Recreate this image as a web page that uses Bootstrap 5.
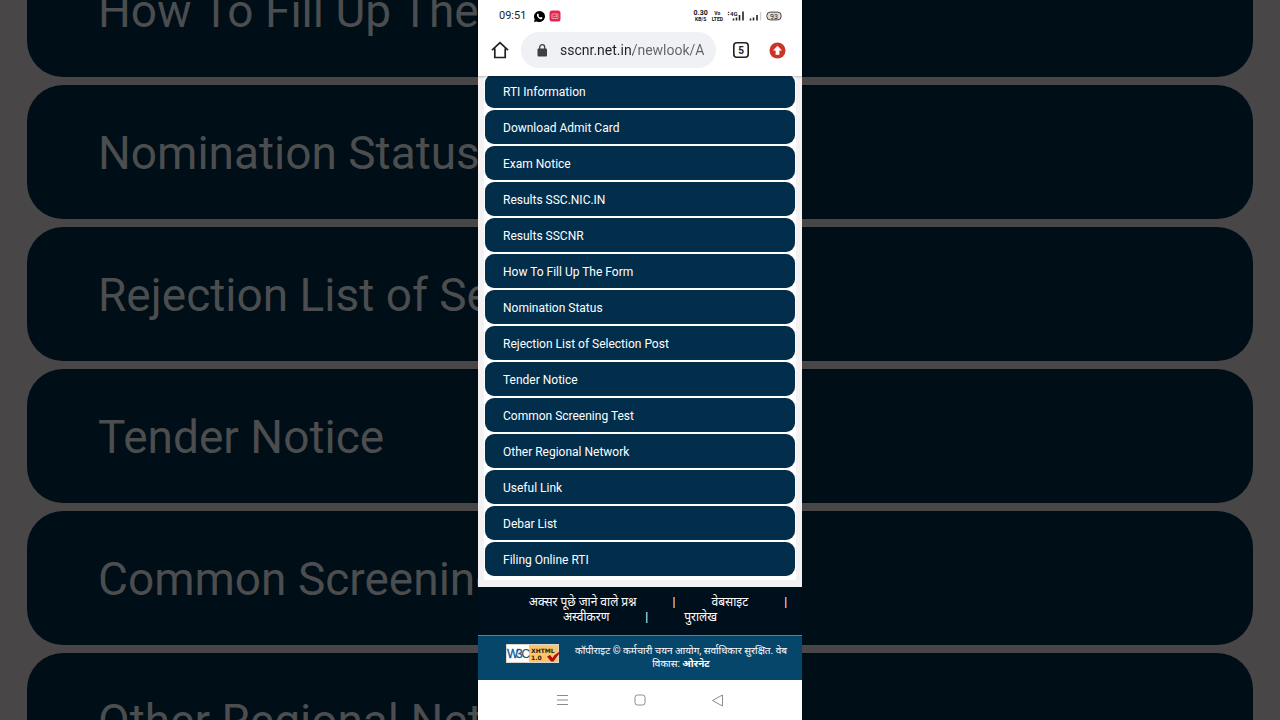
<!DOCTYPE html>
<html lang="en">
<head>
<meta charset="utf-8">
<meta name="viewport" content="width=device-width, initial-scale=1">
<title>SSCNR</title>
<link href="https://cdn.jsdelivr.net/npm/bootstrap@5.3.0/dist/css/bootstrap.min.css" rel="stylesheet">
<style>
  body { font-family: Roboto, "Noto Sans", "Liberation Sans", sans-serif; background: #484646; }
  .stage { display: grid; grid-template-columns: minmax(0, 1fr) 324px minmax(0, 1fr); height: 100vh; min-height: 720px; overflow: hidden; }
  .backdrop { gap: 8px; padding-top: 10px; min-height: 0; }
  .big-pill { flex: 0 0 134px; background: #000e17; color: #4b4d4e; font-size: 46px; line-height: 136px; white-space: nowrap; overflow: hidden; }
  .side-left .big-pill { margin-left: 27px; padding-left: 71px; border-radius: 36px 0 0 36px; }
  .side-right .big-pill { margin-right: 27px; border-radius: 0 36px 36px 0; }
  .phone { background: #f3f1f1; min-height: 0; }
  .top-area { z-index: 1; box-shadow: 0 1px 2px rgba(0,0,0,.25); }
  .status { height: 32px; padding: 0 20px 0 21px; font-size: 11px; line-height: 16px; color: #222; }
  .micro { font-size: 5px; line-height: 6px; font-weight: 700; color: #111; text-align: center; }
  .micro-lg { font-size: 7px; }
  .toolbar { height: 44px; padding: 0 16px 8px 13px; }
  .toolbar button { background: none; border: 0; padding: 0; line-height: 0; }
  .omnibox { height: 36px; border-radius: 18px; background: #f0f1f5; padding: 0 8px 0 15px; margin: 0 16px 0 12px; }
  .omnibox input { border: 0; padding: 0; width: 100%; font-size: 14px; line-height: 20px; color: #202124;
    background: linear-gradient(90deg, #202124 73px, #5f6368 73px); -webkit-background-clip: text; background-clip: text; -webkit-text-fill-color: transparent; outline: 0; }
  .tabs-btn { margin-right: 19px; }
  .panel { margin: -2px 6px 7px; padding: 0 1px 4px; background: #fff; }
  .menu-list { gap: 2px; }
  .menu-list .list-group-item { background: #032e4b; color: #fff; border: 0; border-radius: 9px; padding: 9px 18px 7px; font-size: 12px; line-height: 18px; }
  .foot-links { background: #000f1c; border-bottom: 1px solid #6d7a83; padding: 8px 0 10px; font-size: 12px; line-height: 15px; color: #fff; }
  .foot-links a { color: #fff; padding: 0 36px; text-decoration: none; }
  .foot-copy { background: #07466b; color: #fff; padding: 8px 15px 10px 28px; font-size: 10px; line-height: 13px; }
  .w3c { font-family: "DejaVu Sans", sans-serif; }
  .keys { padding: 0 78px; background: #fff; }
  .keys button { background: none; border: 0; padding: 0; line-height: 0; }
</style>
</head>
<body>
<main class="stage">
  <div class="backdrop side-left d-flex flex-column justify-content-center" aria-hidden="true">
    <div class="big-pill">How To Fill Up The</div>
    <div class="big-pill">Nomination Status</div>
    <div class="big-pill">Rejection List of Selection Post</div>
    <div class="big-pill">Tender Notice</div>
    <div class="big-pill">Common Screening Test</div>
    <div class="big-pill">Other Regional Network</div>
  </div>

  <section class="phone d-flex flex-column">
    <header class="top-area bg-white position-relative">
      <div class="status d-flex align-items-center">
        <span class="me-2">09:51</span>
        <svg width="11" height="11" viewBox="0 0 20 20" class="me-1" aria-label="WhatsApp"><path d="M10 0a10 10 0 1 1-4.600 18.900L0 20l1.300-5A10 10 0 0 1 10 0z" fill="#000"/><path d="M5.500 5.800c1-1.700 2-1.700 2.600-.3l.8 1.700c.2.600-.9 1.400-.7 1.900.7 1.300 1.600 2.200 2.900 2.800.6.200 1.300-1.200 1.900-.9l2 1c1 .6.100 2.500-1.500 2.900-3.800.7-9.300-5-8-9.100z" fill="#fff"/></svg>
        <svg width="12" height="12" viewBox="0 0 24 24" class="me-auto" aria-label="Recorder"><rect x="1" y="1" width="22" height="22" rx="5" fill="#e5274f"/><rect x="6" y="8" width="12" height="9" rx="1" fill="none" stroke="#fbb" stroke-width="1.600"/><path d="M9 13h3l3-2v3" stroke="#fbb" stroke-width="1.500" fill="none"/></svg>
        <div class="micro me-1"><div class="micro-lg">0.30</div><div>KB/S</div></div>
        <div class="micro me-1"><div>Vo</div><div>LTED</div></div>
        <svg width="18" height="12" viewBox="0 0 18 12" aria-label="4G signal"><text x="3" y="6" font-size="6" font-weight="700" fill="#222">4G</text><path d="M.5 3l1-1.500L2.500 3zM.5 4l1 1.500L2.500 4z" fill="#333"/><path d="M6.500 8.500v2M9.500 7.500v3M12.500 5v5.500M16 1.500v9" stroke="#222" stroke-width="1.600"/></svg>
        <svg width="13" height="12" viewBox="0 0 13 12" class="ms-1 me-1" aria-label="Signal"><path d="M1.500 8.500v2M4.500 7.500v3M8 5v5.500" stroke="#222" stroke-width="1.600"/><path d="M11.500 2v8.500" stroke="#ccc" stroke-width="1.200"/></svg>
        <svg width="16" height="10" viewBox="0 0 16 10" aria-label="Battery"><rect x=".8" y="1.100" width="14.400" height="7.800" rx="3.500" fill="#ddd" stroke="#444"/><text x="8" y="7.500" font-size="7" text-anchor="middle" fill="#222">93</text></svg>
      </div>
      <div class="toolbar d-flex align-items-center">
        <button type="button" aria-label="Home"><svg width="18" height="18" viewBox="0 0 18 18" fill="none" stroke="#202124" stroke-width="1.700"><path d="M1 9.200 9 1.700l8 7.500M3.800 7.500v9h10.400v-9"/></svg></button>
        <div class="omnibox d-flex align-items-center flex-grow-1">
          <svg width="12" height="13" viewBox="0 0 12 13" class="flex-shrink-0 me-2"><rect x="1.500" y="4.500" width="9.500" height="8" rx="1" fill="#3c4043"/><path d="M3.700 5V3.200a2.500 2.500 0 0 1 5 0V5" fill="none" stroke="#3c4043" stroke-width="1.300"/></svg>
          <input class="ms-1" type="text" value="sscnr.net.in/newlook/A" aria-label="Address">
        </div>
        <button type="button" class="tabs-btn" aria-label="5 tabs"><svg width="18" height="18" viewBox="0 0 18 18"><rect x="1.800" y="1.800" width="14.400" height="14.400" rx="3" fill="none" stroke="#202124" stroke-width="1.600"/><text x="9" y="12.500" font-size="10" font-weight="700" text-anchor="middle" fill="#202124">5</text></svg></button>
        <button type="button" aria-label="Update"><svg width="17" height="17" viewBox="0 0 17 17"><circle cx="8.500" cy="8.500" r="8" fill="#cb3529"/><path d="M8.500 3.700 13 8.500h-2.600v4.200H6.600V8.500H4z" fill="#fff"/></svg></button>
      </div>
    </header>

    <div class="panel">
      <nav class="menu-list list-group" aria-label="Menu">
        <a href="#" class="list-group-item">RTI Information</a>
        <a href="#" class="list-group-item">Download Admit Card</a>
        <a href="#" class="list-group-item">Exam Notice</a>
        <a href="#" class="list-group-item">Results SSC.NIC.IN</a>
        <a href="#" class="list-group-item">Results SSCNR</a>
        <a href="#" class="list-group-item">How To Fill Up The Form</a>
        <a href="#" class="list-group-item">Nomination Status</a>
        <a href="#" class="list-group-item">Rejection List of Selection Post</a>
        <a href="#" class="list-group-item">Tender Notice</a>
        <a href="#" class="list-group-item">Common Screening Test</a>
        <a href="#" class="list-group-item">Other Regional Network</a>
        <a href="#" class="list-group-item">Useful Link</a>
        <a href="#" class="list-group-item">Debar List</a>
        <a href="#" class="list-group-item">Filing Online RTI</a>
      </nav>
    </div>

    <footer lang="hi">
      <div class="foot-links">
        <div class="d-flex justify-content-center text-nowrap"><a href="#">अक्सर पूछे जाने वाले प्रश्न</a><span>|</span><a href="#">वेबसाइट</a><span>|</span></div>
        <div class="d-flex justify-content-center text-nowrap"><a href="#">अस्वीकरण</a><span>|</span><a href="#">पुरालेख</a></div>
      </div>
      <div class="foot-copy d-flex">
        <svg class="w3c flex-shrink-0" width="53" height="19" viewBox="0 0 53 19" aria-label="W3C XHTML 1.0"><rect width="53" height="19" fill="#d8d8d0"/><rect x="1" y="1" width="22" height="17" fill="#fff"/><rect x="23" y="1" width="29" height="17" fill="#fdc565"/><text x="1" y="14" font-size="12" font-family="Liberation Sans Narrow, Liberation Sans, sans-serif" fill="#0b5a9c" stroke="#0b5a9c" stroke-width=".3">W</text><text x="10" y="14" font-size="12" font-family="Liberation Sans Narrow, Liberation Sans, sans-serif" fill="#0b5a9c" stroke="#0b5a9c" stroke-width=".3">3</text><text x="15.500" y="14" font-size="12" font-family="Liberation Sans Narrow, Liberation Sans, sans-serif" fill="#444">C</text><text x="25" y="9" font-size="6" font-weight="700" fill="#222">XHTML</text><text x="25" y="16" font-size="6" font-weight="700" fill="#222">1.0</text><path d="M41 12.500l3-1.500 2.500 3Q49 10 53 8V10q-3 3.500-5.500 7.500h-2.500z" fill="#b01010"/></svg>
        <div class="text-center flex-grow-1 ps-3">कॉपीराइट © कर्मचारी चयन आयोग, सर्वाधिकार सुरक्षित. वेब विकास: <strong>ओरनेट</strong></div>
      </div>
    </footer>

    <div class="keys d-flex align-items-center justify-content-between flex-grow-1">
      <button type="button" aria-label="Recent apps"><svg width="13" height="12" viewBox="0 0 13 12" stroke="#8c8c8c"><path d="M1 1.500h11M1 6h11M1 10.500h11"/></svg></button>
      <button type="button" aria-label="Home screen"><svg width="12" height="12" viewBox="0 0 12 12"><rect x="1" y="1" width="10" height="10" rx="2.500" fill="none" stroke="#8c8c8c"/></svg></button>
      <button type="button" aria-label="Back"><svg width="13" height="13" viewBox="0 0 13 13"><path d="M1.500 6.500l10-5.500v11z" fill="none" stroke="#8c8c8c" stroke-linejoin="round"/></svg></button>
    </div>
  </section>

  <div class="backdrop side-right d-flex flex-column justify-content-center" aria-hidden="true">
    <div class="big-pill"></div>
    <div class="big-pill"></div>
    <div class="big-pill"></div>
    <div class="big-pill"></div>
    <div class="big-pill"></div>
    <div class="big-pill"></div>
  </div>
</main>
<script src="https://cdn.jsdelivr.net/npm/bootstrap@5.3.0/dist/js/bootstrap.bundle.min.js"></script>
</body>
</html>
